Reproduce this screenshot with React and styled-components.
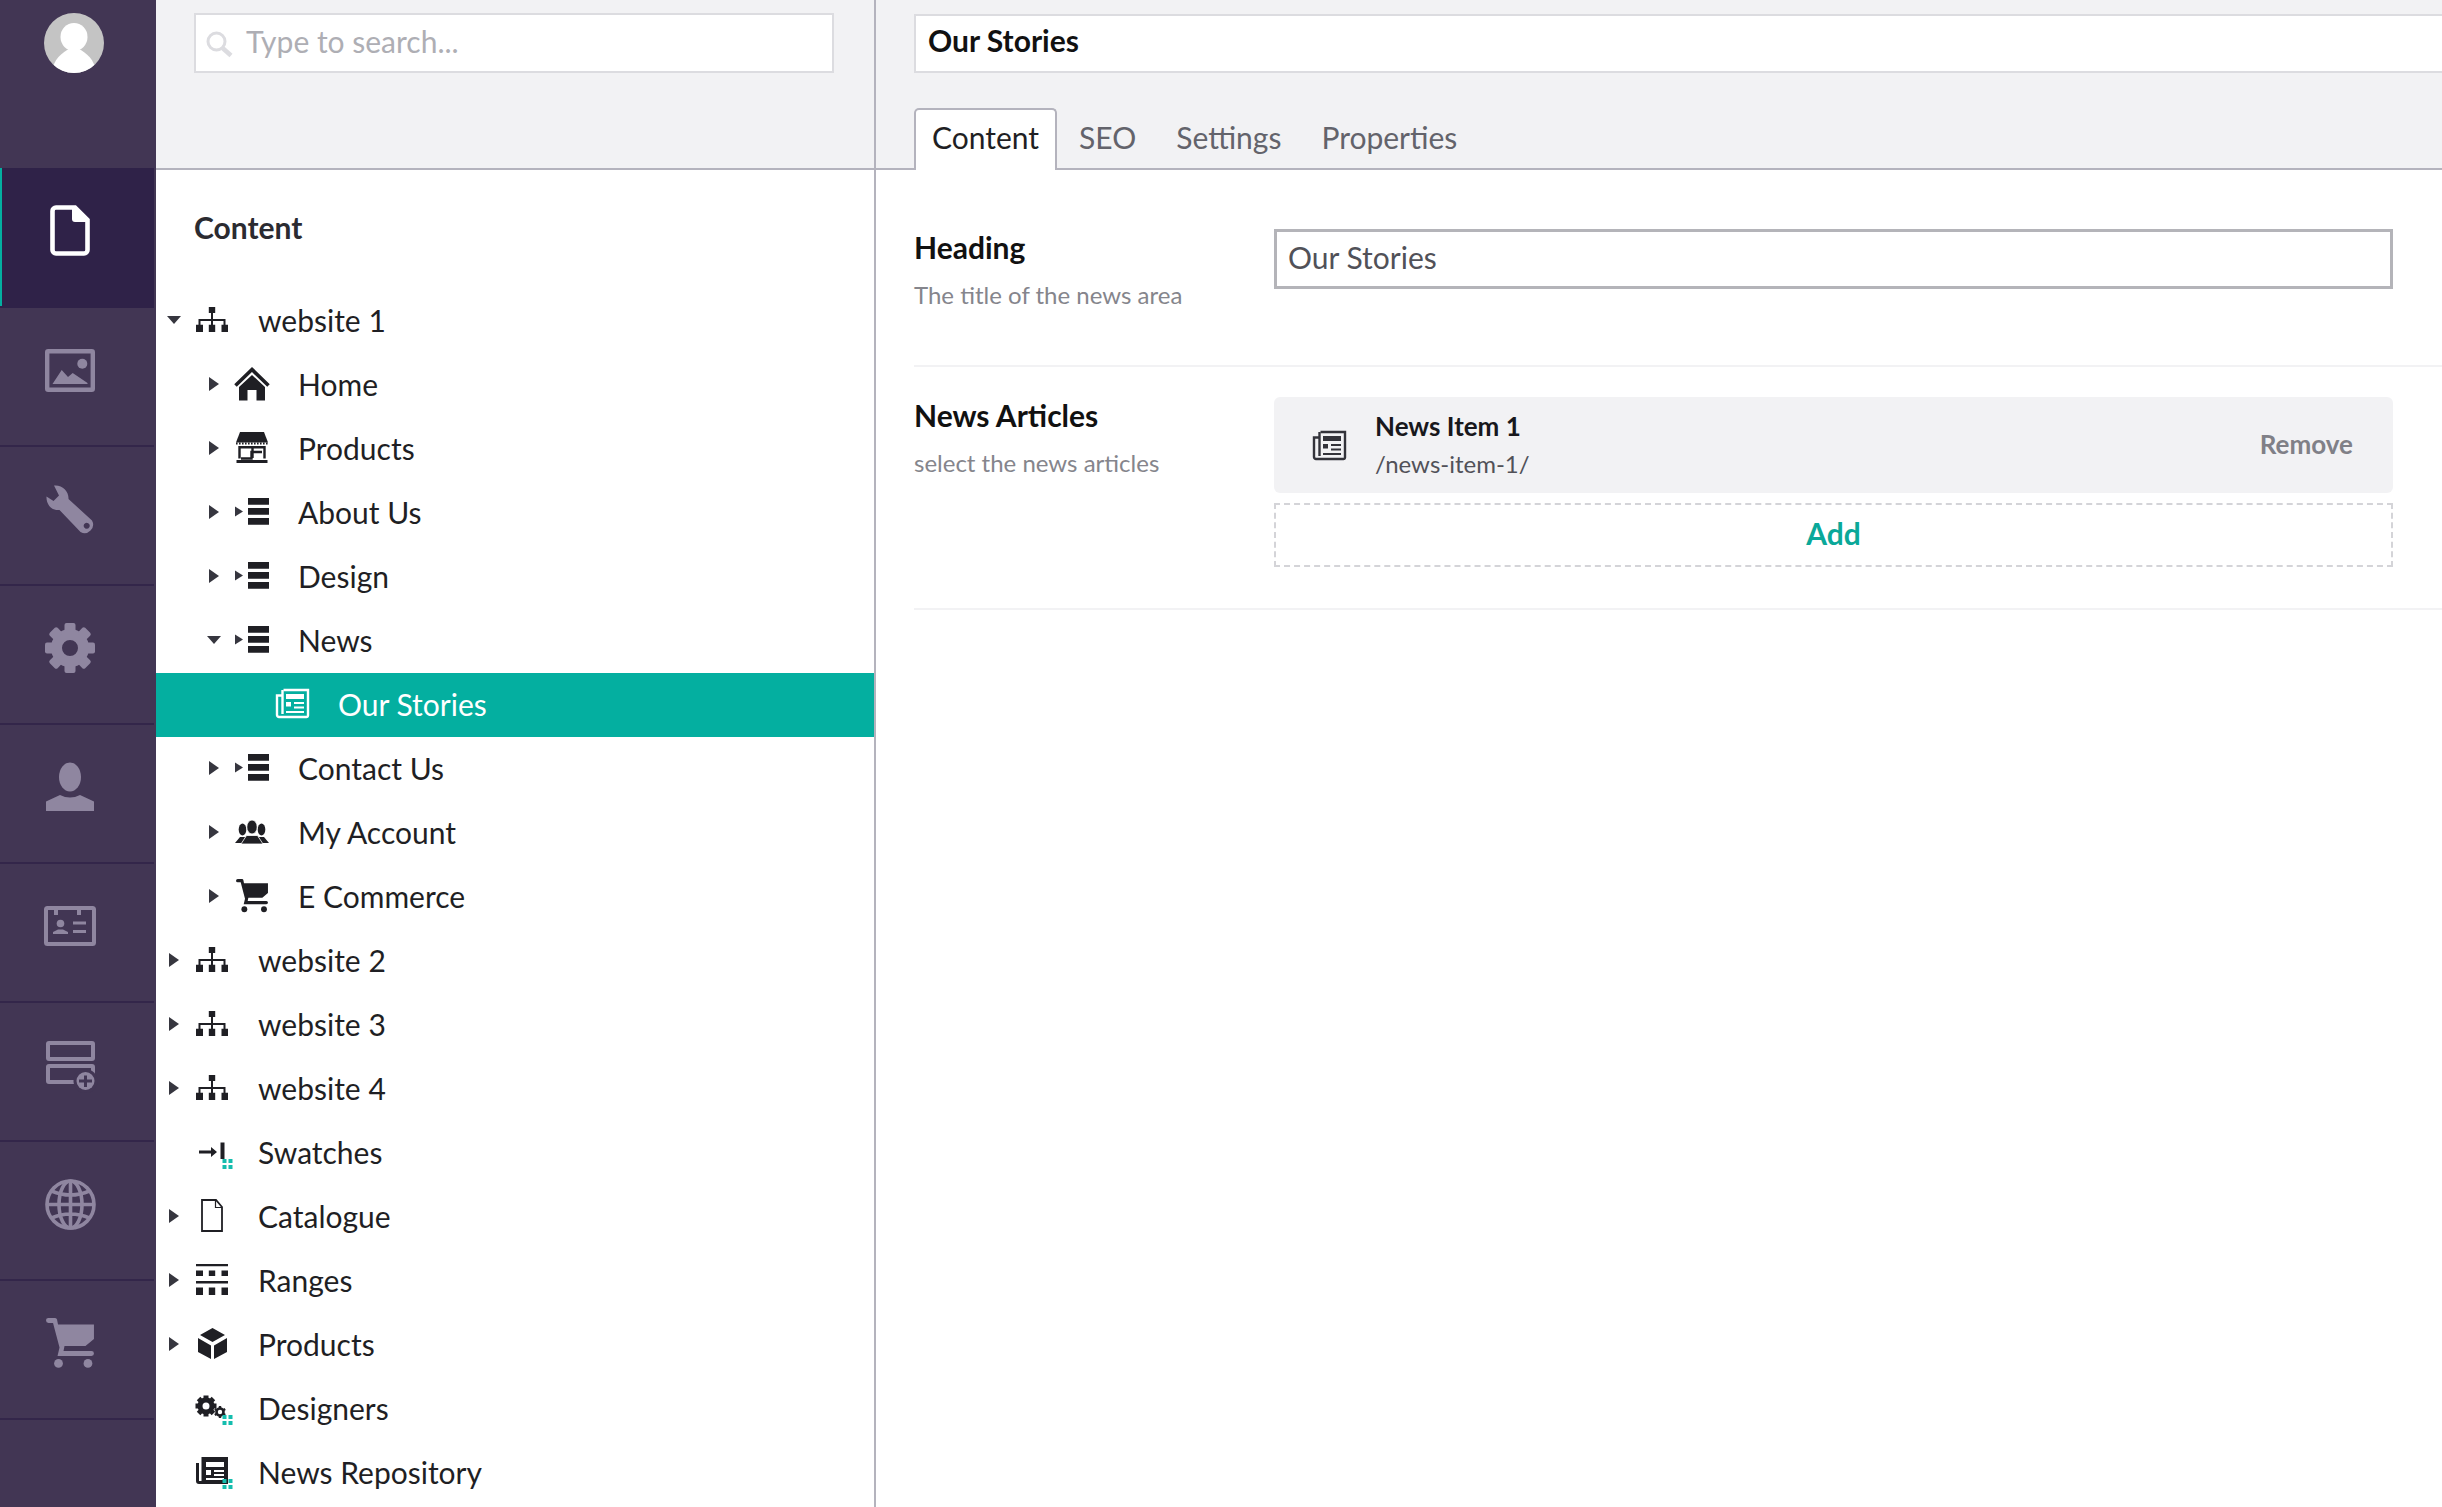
import React from "react";
import styled, { createGlobalStyle } from "styled-components";

const TEAL = "#04afa0";
const INK = "#1f1f24";
const PURPLE = "#423654";

const GlobalStyle = createGlobalStyle`
  html, body {
    margin: 0;
    height: 100%;
    background: #fff;
  }
  body {
    font-family: Lato, "Open Sans", sans-serif;
    color: ${INK};
  }
  * {
    box-sizing: border-box;
  }
`;

const Glyph = styled.svg`
  display: block;
  flex: none;
  overflow: visible;
  fill: currentColor;
`;

// sidebar icons
const FileIcon = () => (
  <Glyph width="40" height="51" viewBox="0 0 40 51">
    <path d="M6 2.5H25L37.5 15V45a3.5 3.5 0 0 1-3.5 3.5H6A3.5 3.5 0 0 1 2.5 45V6A3.5 3.5 0 0 1 6 2.5Z" fill="none" stroke="currentColor" strokeWidth="4.6" />
    <path d="M22 3H27L38 14V17H25a3 3 0 0 1-3-3Z" />
  </Glyph>
);

const ImageIcon = () => (
  <Glyph width="50" height="43" viewBox="0 0 50 43">
    <rect x="2.2" y="2.2" width="45.6" height="38.6" rx="1" fill="none" stroke="currentColor" strokeWidth="4.4" />
    <circle cx="37.3" cy="14.7" r="5" />
    <path d="M7.5 35L16.7 21 23 28 27.7 24 42.5 34V35Z" />
  </Glyph>
);

const WrenchIcon = () => (
  <Glyph width="48" height="48" viewBox="0 0 48 48">
    <path
      fillRule="evenodd"
      d="M8 .5C16-.5 23 6 22.5 14L46 35.5A8.5 8.5 0 0 1 34.5 47L13.5 25C6 26 0 19.5.5 11.5L7.5 16 13 10.5ZM40.7 37.7a3 3 0 1 0 .01 0Z"
    />
  </Glyph>
);

const GearIcon = () => (
  <Glyph width="50" height="50" viewBox="0 0 50 50">
    <circle cx="25" cy="25" r="13.5" fill="none" stroke="currentColor" strokeWidth="11" />
    {[0, 45, 90, 135, 180, 225, 270, 315].map((a) => (
      <rect key={a} x="19.5" y="0" width="11" height="9" rx="2" transform={`rotate(${a} 25 25)`} />
    ))}
  </Glyph>
);

const PersonIcon = () => (
  <Glyph width="48" height="48" viewBox="0 0 48 48">
    <ellipse cx="24" cy="14" rx="11" ry="14.5" />
    <path d="M0 38.5L14 32Q24 37 34 32L48 38.5V48H0Z" />
  </Glyph>
);

const CardIcon = () => (
  <Glyph width="52" height="40" viewBox="0 0 52 40">
    <rect x="2" y="2" width="48" height="36" rx="1.5" fill="none" stroke="currentColor" strokeWidth="4" />
    <path d="M10 3h4v6h-4ZM33 3h4v6h-4Z" />
    <circle cx="16.5" cy="17.5" r="3.8" />
    <path d="M9 28v-2l5-2.5h5l5 2.5v2ZM29 15.5h13v3H29ZM29 24h13v3H29Z" />
  </Glyph>
);

const LayoutIcon = () => (
  <Glyph width="49" height="49" viewBox="0 0 49 49">
    <rect x="2" y="2" width="45" height="16" rx="1" fill="none" stroke="currentColor" strokeWidth="4" />
    <rect x="2" y="25" width="45" height="16" rx="1" fill="none" stroke="currentColor" strokeWidth="4" />
    <circle cx="39.5" cy="40" r="12" fill={PURPLE} />
    <circle cx="39.5" cy="40" r="9" />
    <path d="M38 34.5h3V38.500h5v3h-5V46h-3v-4.500h-5v-3h5Z" fill={PURPLE} />
  </Glyph>
);

const GlobeIcon = () => (
  <Glyph width="51" height="51" viewBox="0 0 51 51">
    <g fill="none" stroke="currentColor" strokeWidth="3.6">
      <circle cx="25.500" cy="25.500" r="23.500" />
      <ellipse cx="25.500" cy="25.500" rx="11.500" ry="23.500" />
      <path d="M25.500 2v47M2 25.500h47M6.500 12Q25.500 20 44.500 12M6.500 39Q25.500 31 44.500 39" />
    </g>
  </Glyph>
);

const CartIcon = ({ size = 48 }) => (
  <Glyph width={size} height={size * 1.04} viewBox="0 0 48 50">
    <path d="M2.500 0H9a2 2 0 0 1 2 1.500L12 6.500H48V21L39.500 28H18.500L17.500 33H45.500a2.500 2.500 0 0 1 0 5H11.500L13.500 29.500 7 5H2.500a2.500 2.500 0 0 1 0-5Z" />
    <circle cx="12.500" cy="45.500" r="4.400" />
    <circle cx="42" cy="45.500" r="4.400" />
  </Glyph>
);

// tree icons
const SitemapIcon = () => (
  <Glyph width="32" height="25" viewBox="0 0 32 25">
    <path d="M12.800 0h6.400v6h-6.400ZM15 6h2v6h12.500v6h-2v-4h-10.500v4h-2v-4H4.500v4h-2v-6H15ZM0 17.800h7V25H0ZM12.800 17.800h6.400V25h-6.400ZM25.500 17.800H32V25h-6.500Z" />
  </Glyph>
);

const HomeIcon = () => (
  <Glyph width="36" height="34" viewBox="0 0 36 34">
    <path d="M1.500 18.500L18 2.500 34.500 18.500" fill="none" stroke="currentColor" strokeWidth="3.600" />
    <path d="M5 33.500V20L18 8 31 20V33.500H22.500V23H13.500V33.500Z" />
  </Glyph>
);

const StoreIcon = () => (
  <Glyph width="32" height="31" viewBox="0 0 32 31">
    <path d="M4 0H28L32 10.500H0Z" />
    <path d="M0 11.500H32" stroke="currentColor" strokeWidth="2" strokeDasharray="1.600 1.400" />
    <path d="M3.500 14V26.500M28.500 14V26.500M3 15.200H29M5 26.500H15.500V20H26" fill="none" stroke="currentColor" strokeWidth="2.400" />
    <path d="M16.500 15v11" stroke="currentColor" strokeWidth="2.400" />
    <path d="M.5 28H31.500V31H.5Z" />
  </Glyph>
);

const ListIcon = () => (
  <Glyph width="34" height="27" viewBox="0 0 34 27">
    <path d="M0 8.500L8 13.500 0 18.500Z" fill="#36363f" />
    <path d="M13 0H34V6.700H13ZM13 10H34V16.700H13ZM13 20H34V26.700H13Z" />
  </Glyph>
);

const GroupIcon = () => (
  <Glyph width="34" height="24" viewBox="0 0 34 24">
    <ellipse cx="7.500" cy="9.500" rx="3.800" ry="6" />
    <ellipse cx="26.500" cy="9.500" rx="3.800" ry="6" />
    <path d="M0 23L5 17H10L13 23ZM21 23L24 17H29L34 23Z" />
    <ellipse cx="17" cy="7" rx="5.200" ry="7" stroke="#fff" strokeWidth=".8" />
    <path d="M6 24L11.500 15.500H22.500L28 24Z" stroke="#fff" strokeWidth=".8" />
  </Glyph>
);

const NewsIcon = ({ width = 33, height = 29 }) => (
  <Glyph width={width} height={height} viewBox="0 0 33 29">
    <path
      d="M7.500 1H32V26.500a1.500 1.500 0 0 1-1.500 1.500H3a2 2 0 0 1-2-2V6.500H6"
      fill="none"
      stroke="currentColor"
      strokeWidth="2.400"
    />
    <path d="M6.500 1V25" fill="none" stroke="currentColor" strokeWidth="2.400" />
    <path d="M10 5H28V10H10ZM10 13H15V17.500H10ZM18 13H28V15H18ZM18 17.500H28V19.500H18ZM10 22H28V24H10Z" />
  </Glyph>
);

const Dots = () => (
  <g fill="#14bdae">
    <rect x="28.500" y="25" width="4" height="4" />
    <rect x="34.500" y="25" width="4" height="4" />
    <rect x="28.500" y="31" width="4" height="4" />
    <rect x="34.500" y="31" width="4" height="4" />
  </g>
);

const SwatchIcon = () => (
  <Glyph width="36" height="36" viewBox="0 0 36 36">
    <path d="M5 16.500H17V13L23 18 17 23V19.500H5ZM26.500 8.500H30.500V25H26.500Z" />
    <Dots />
  </Glyph>
);

const DocIcon = () => (
  <Glyph width="22" height="33" viewBox="0 0 22 33">
    <path d="M1 1H15L21 8V32H1Z" fill="none" stroke="currentColor" strokeWidth="1.800" />
    <path d="M14.500 1V8.500H21" fill="none" stroke="currentColor" strokeWidth="1.200" />
  </Glyph>
);

const RangesIcon = () => (
  <Glyph width="32" height="31" viewBox="0 0 32 31">
    <path d="M0 0H32V2.200H0ZM0 6.500H7V12H0ZM12.800 6.500H19.200V12H12.800ZM25.500 6.500H32V12H25.500ZM0 17H32V19.500H0ZM0 23.500H7V31H0ZM12.800 23.500H19.200V31H12.800ZM25.500 23.500H32V31H25.500Z" />
  </Glyph>
);

const BoxIcon = () => (
  <Glyph width="29" height="31" viewBox="0 0 29 31">
    <path d="M14.500 0L27 7 14.500 14 2 7ZM0 10L13 17.500V31L0 24ZM29 10L16 17.500V31L29 24Z" />
  </Glyph>
);

const CogsIcon = () => (
  <Glyph width="36" height="36" viewBox="0 0 36 36">
    <circle cx="12" cy="16" r="6" fill="none" stroke="currentColor" strokeWidth="5" />
    {[0, 45, 90, 135, 180, 225, 270, 315].map((a) => (
      <rect key={a} x="9.500" y="5.500" width="5" height="4" transform={`rotate(${a} 12 16)`} />
    ))}
    <circle cx="26" cy="22" r="3.500" fill="none" stroke="currentColor" strokeWidth="2.600" />
    {[0, 60, 120, 180, 240, 300].map((a) => (
      <rect key={a} x="24.800" y="16" width="2.400" height="2.400" transform={`rotate(${a} 26 22)`} />
    ))}
    <Dots />
  </Glyph>
);

const NewsRepoIcon = () => (
  <Glyph width="36" height="36" viewBox="0 0 36 36">
    <path d="M6 3H34V30H5a3 3 0 0 1-3-3V9H5V27H7.500V3Z" />
    <path d="M12 8H30V13H12ZM12 16H17V21H12ZM20 16H30V18H20ZM20 20H30V22H20ZM12 24H30V26H12Z" fill="#fff" />
    <Dots />
  </Glyph>
);

const sideItems = [
  { icon: <FileIcon />, active: true },
  { icon: <ImageIcon /> },
  { icon: <WrenchIcon /> },
  { icon: <GearIcon /> },
  { icon: <PersonIcon /> },
  { icon: <CardIcon /> },
  { icon: <LayoutIcon /> },
  { icon: <GlobeIcon /> },
  { icon: <CartIcon /> },
];

const tree = [
  { label: "website 1", level: 0, caret: "open", icon: <SitemapIcon /> },
  { label: "Home", level: 1, caret: "closed", icon: <HomeIcon /> },
  { label: "Products", level: 1, caret: "closed", icon: <StoreIcon /> },
  { label: "About Us", level: 1, caret: "closed", icon: <ListIcon /> },
  { label: "Design", level: 1, caret: "closed", icon: <ListIcon /> },
  { label: "News", level: 1, caret: "open", icon: <ListIcon /> },
  { label: "Our Stories", level: 2, selected: true, icon: <NewsIcon width={33} height={31} /> },
  { label: "Contact Us", level: 1, caret: "closed", icon: <ListIcon /> },
  { label: "My Account", level: 1, caret: "closed", icon: <GroupIcon /> },
  { label: "E Commerce", level: 1, caret: "closed", icon: <CartIcon size={32} /> },
  { label: "website 2", level: 0, caret: "closed", icon: <SitemapIcon /> },
  { label: "website 3", level: 0, caret: "closed", icon: <SitemapIcon /> },
  { label: "website 4", level: 0, caret: "closed", icon: <SitemapIcon /> },
  { label: "Swatches", level: 0, icon: <SwatchIcon /> },
  { label: "Catalogue", level: 0, caret: "closed", icon: <DocIcon /> },
  { label: "Ranges", level: 0, caret: "closed", icon: <RangesIcon /> },
  { label: "Products", level: 0, caret: "closed", icon: <BoxIcon /> },
  { label: "Designers", level: 0, icon: <CogsIcon /> },
  { label: "News Repository", level: 0, icon: <NewsRepoIcon /> },
];

const tabs = ["Content", "SEO", "Settings", "Properties"];

export default function App() {
  return (
    <Page>
      <GlobalStyle />
      <Sidebar>
        <AvatarSlot>
          <Glyph width="60" height="60" viewBox="0 0 60 60">
            <clipPath id="avatar">
              <circle cx="30" cy="30" r="30" />
            </clipPath>
            <g clipPath="url(#avatar)">
              <rect width="60" height="60" fill="#c4c4c4" />
              <ellipse cx="30" cy="24" rx="13.500" ry="14" fill="#fff" />
              <path d="M8 60C9 46 18 40 25 36H35C42 40 51 46 52 60Z" fill="#fff" />
            </g>
          </Glyph>
        </AvatarSlot>
        {sideItems.map((item, i) => (
          <SideItem key={i} $active={item.active}>
            {item.icon}
          </SideItem>
        ))}
      </Sidebar>

      <TreePanel>
        <TreeHeader>
          <SearchBox>
            <Glyph width="27" height="25" viewBox="0 0 27 25" color="#dcdce0">
              <circle cx="10.500" cy="10.500" r="8.500" fill="none" stroke="currentColor" strokeWidth="3" />
              <path d="M16.500 17L25 24.500" stroke="currentColor" strokeWidth="4.500" />
            </Glyph>
            <SearchHint>Type to search...</SearchHint>
          </SearchBox>
        </TreeHeader>
        <SectionTitle>Content</SectionTitle>
        <TreeList>
          {tree.map((node) => (
            <TreeRow key={node.label + node.level} $level={node.level} $selected={node.selected}>
              <CaretSlot>{node.caret && <Caret $open={node.caret === "open"} />}</CaretSlot>
              <IconSlot>{node.icon}</IconSlot>
              <span>{node.label}</span>
            </TreeRow>
          ))}
        </TreeList>
      </TreePanel>

      <Main>
        <MainHeader>
          <TitleBox>Our Stories</TitleBox>
          <Tabs>
            {tabs.map((t, i) => (
              <Tab key={t} $active={i === 0}>
                {t}
              </Tab>
            ))}
          </Tabs>
        </MainHeader>
        <Form>
          <FormRow>
            <LabelCol>
              <FieldLabel>Heading</FieldLabel>
              <FieldHint>The title of the news area</FieldHint>
            </LabelCol>
            <Field>
              <TextBox>Our Stories</TextBox>
            </Field>
          </FormRow>
          <FormRow>
            <LabelCol>
              <FieldLabel>News Articles</FieldLabel>
              <FieldHint>select the news articles</FieldHint>
            </LabelCol>
            <Field>
              <PickedItem>
                <NewsIcon />
                <PickedText>
                  <PickedName>News Item 1</PickedName>
                  <PickedPath>/news-item-1/</PickedPath>
                </PickedText>
                <RemoveLink>Remove</RemoveLink>
              </PickedItem>
              <AddButton>Add</AddButton>
            </Field>
          </FormRow>
        </Form>
      </Main>
    </Page>
  );
}

const Page = styled.div`
  display: flex;
  height: 100vh;
  overflow: hidden;
`;

const Sidebar = styled.nav`
  flex: 0 0 156px;
  background: ${PURPLE};
  color: #8f86a0;
`;

const AvatarSlot = styled.div`
  height: 168px;
  padding: 13px 0 0 44px;
`;

const SideItem = styled.div`
  width: 154px;
  height: ${(p) => (p.$active ? 140 : 139)}px;
  padding: 0 14px 13px 0;
  display: flex;
  align-items: center;
  justify-content: center;
  border-bottom: 2px solid #33264a;
  ${(p) =>
    p.$active &&
    `
    background: #2f2248;
    color: #fff;
    box-shadow: inset 2px 0 0 ${TEAL};
    border-bottom-color: #2f2248;
  `}
`;

const TreePanel = styled.aside`
  flex: 0 0 720px;
  border-right: 2px solid #b4b3bd;
`;

const TreeHeader = styled.div`
  height: 170px;
  padding: 13px 40px 0 38px;
  background: #f2f2f4;
  border-bottom: 2px solid #b4b3bd;
`;

const SearchBox = styled.div`
  height: 60px;
  padding-left: 10px;
  display: flex;
  align-items: center;
  gap: 13px;
  background: #fff;
  border: 2px solid #dcdce0;
  font-size: 30px;
  color: #aeaeb4;
`;

const SearchHint = styled.span`
  padding-bottom: 4px;
`;

const SectionTitle = styled.h2`
  margin: 0;
  height: 119px;
  padding: 38px 0 0 38px;
  font-size: 30px;
  line-height: 38px;
  font-weight: 700;
  color: #2b2b31;
`;

const TreeList = styled.div`
  display: flex;
  flex-direction: column;
`;

const TreeRow = styled.div`
  flex: none;
  height: 64px;
  display: flex;
  align-items: center;
  padding: 0 0 3px ${(p) => 8 + p.$level * 40}px;
  font-size: 30px;
  color: ${(p) => (p.$selected ? "#fff" : INK)};
  background: ${(p) => (p.$selected ? TEAL : "transparent")};
`;

const CaretSlot = styled.div`
  flex: 0 0 20px;
  margin-right: 10px;
  display: flex;
  justify-content: center;
`;

const Caret = styled.i`
  display: block;
  ${(p) =>
    p.$open
      ? `
    border-top: 8px solid #36363f;
    border-left: 7px solid transparent;
    border-right: 7px solid transparent;
  `
      : `
    border-left: 10px solid #36363f;
    border-top: 7.500px solid transparent;
    border-bottom: 7.500px solid transparent;
  `}
`;

const IconSlot = styled.div`
  flex: 0 0 36px;
  margin-right: 28px;
  display: flex;
  justify-content: center;
  align-items: center;
`;

const Main = styled.main`
  flex: 1;
  min-width: 0;
  overflow: hidden;
`;

const MainHeader = styled.header`
  height: 170px;
  padding: 14px 0 0 38px;
  background: #f2f2f4;
  border-bottom: 2px solid #b4b3bd;
`;

const TitleBox = styled.div`
  width: 1600px;
  height: 59px;
  padding: 0 0 7px 12px;
  display: flex;
  align-items: center;
  background: #fff;
  border: 2px solid #dcdce0;
  font-size: 30px;
  font-weight: 700;
  color: #111;
`;

const Tabs = styled.div`
  display: flex;
  gap: 4px;
  margin-top: 35px;
`;

const Tab = styled.div`
  height: 62px;
  padding: 0 16px 7px;
  display: flex;
  align-items: center;
  font-size: 30px;
  border: 2px solid ${(p) => (p.$active ? "#b4b3bd" : "transparent")};
  border-bottom: 0;
  border-radius: 5px 5px 0 0;
  background: ${(p) => (p.$active ? "#fff" : "transparent")};
  color: ${(p) => (p.$active ? INK : "#63636b")};
`;

const Form = styled.div`
  padding: 29px 0 0 38px;
`;

const FormRow = styled.section`
  display: flex;
  padding: 30px 0 41px;
  border-bottom: 2px solid #f2f2f4;
`;

const LabelCol = styled.div`
  flex: 0 0 360px;
  padding: 3px 0 14px;
`;

const FieldLabel = styled.div`
  font-size: 30px;
  line-height: 30px;
  font-weight: 700;
  color: #111;
`;

const FieldHint = styled.div`
  margin-top: 18px;
  font-size: 24px;
  line-height: 30px;
  color: #85858c;
`;

const Field = styled.div`
  width: 1119px;
  display: flex;
  flex-direction: column;
  gap: 10px;
`;

const TextBox = styled.div`
  height: 60px;
  padding: 0 0 5px 11px;
  display: flex;
  align-items: center;
  border: 3px solid #b4b4b9;
  font-size: 30px;
  color: #515158;
`;

const PickedItem = styled.div`
  height: 96px;
  padding: 0 40px 0 39px;
  display: flex;
  align-items: center;
  background: #f2f2f4;
  border-radius: 6px;
  color: #33333a;
`;

const PickedText = styled.div`
  margin-left: 29px;
  padding-bottom: 1px;
  flex: 1;
`;

const PickedName = styled.div`
  font-size: 26px;
  line-height: 38px;
  font-weight: 700;
  color: #18181c;
`;

const PickedPath = styled.div`
  font-size: 24px;
  line-height: 38px;
  color: #515158;
`;

const RemoveLink = styled.div`
  padding-bottom: 3px;
  font-size: 26px;
  font-weight: 700;
  color: #808087;
`;

const AddButton = styled.div`
  height: 64px;
  padding-bottom: 5px;
  display: flex;
  align-items: center;
  justify-content: center;
  border: 2px dashed #d4d4d8;
  font-size: 30px;
  font-weight: 700;
  color: #0aa899;
`;
